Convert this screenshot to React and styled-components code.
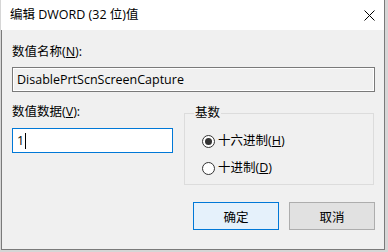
import React from 'react'
import styled, { createGlobalStyle } from 'styled-components'

const GlobalStyle = createGlobalStyle`
    html, body {
        margin: 0;
        padding: 0;
        background: #d6d6d6;
    }
    body {
        width: 388px;
        height: 252px;
        overflow: hidden;
        font-family: "Open Sans", "Noto Sans CJK SC", sans-serif;
        font-size: 12.5px;
        color: #000;
    }
`

const Window = styled.div`
    margin-left: 1px;
    width: 384px;
    height: 250px;
    box-sizing: border-box;
    background: #f0f0f0;
    border: 1px solid #7a7a7a;
    border-top: none;
    display: flex;
    flex-direction: column;
`

const TitleBar = styled.div`
    height: 30px;
    flex: none;
    background: #fff;
    display: flex;
    align-items: center;
    justify-content: space-between;
    padding: 0 9px 0 9px;
    margin-left: -1px;
`

const Title = styled.span`
    line-height: 16px;
`

const Body = styled.div`
    flex: 1;
    padding: 14px 9px 0 10px;
    display: flex;
    flex-direction: column;
`

const Label = styled.div`
    line-height: 16px;
    height: 16px;
    margin-bottom: ${p => p.$gap || 7}px;
`

const TextBox = styled.div`
    height: 25px;
    box-sizing: border-box;
    display: flex;
    align-items: center;
    padding-left: 4px;
    border: 1px solid ${p => (p.$focused ? '#0078d7' : '#7a7a7a')};
    background: ${p => (p.$focused ? '#fff' : '#f0f0f0')};
    box-shadow: ${p => (p.$focused ? 'none' : 'inset 0 0 0 1px #fff')};
    line-height: 16px;
    white-space: nowrap;
`

const Caret = styled.span`
    display: inline-block;
    width: 1px;
    height: 16px;
    background: #000;
    margin-left: 1px;
`

const Row = styled.div`
    display: grid;
    grid-template-columns: 161px 190px;
    column-gap: 11px;
    margin-top: 12px;
`

const Column = styled.div`
    display: flex;
    flex-direction: column;
`

const Group = styled.fieldset`
    margin: 1px 0 0 0;
    padding: 12px 0 0 9px;
    border: 1px solid #dcdcdc;
    height: 80px;
    box-sizing: border-box;
    min-width: 0;
    display: flex;
    flex-direction: column;
    gap: 11px;
`

const Legend = styled.legend`
    padding: 0 1px;
    margin-left: 0;
    line-height: 16px;
`

const RadioRow = styled.label`
    display: flex;
    align-items: center;
    gap: 3px;
    margin-left: 8px;
    line-height: 16px;
`

const RadioCircle = styled.span`
    width: 13px;
    height: 13px;
    box-sizing: border-box;
    border: 1px solid #333;
    border-radius: 50%;
    background: #fff;
    display: flex;
    align-items: center;
    justify-content: center;
    &::after {
        content: '';
        width: 7px;
        height: 7px;
        border-radius: 50%;
        background: #333;
        display: ${p => (p.$checked ? 'block' : 'none')};
    }
`

const Buttons = styled.div`
    display: flex;
    justify-content: flex-end;
    gap: 10px;
    margin-top: 17px;
`

const Button = styled.button`
    width: 86px;
    height: 28px;
    box-sizing: border-box;
    font: inherit;
    color: #000;
    border: 1px solid ${p => (p.$primary ? '#0078d7' : '#adadad')};
    background: ${p => (p.$primary ? '#e5f1fb' : '#e1e1e1')};
    padding: 0;
`

function CloseIcon() {
    return (
        <svg width="11" height="11" viewBox="0 0 11 11">
            <path d="M0.5 0.5 L10.5 10.5 M10.5 0.5 L0.5 10.5" stroke="#000" strokeWidth="1" fill="none" />
        </svg>
    )
}

export default function App() {
    return (
        <>
            <GlobalStyle />
            <Window>
                <TitleBar>
                    <Title>编辑 DWORD (32 位)值</Title>
                    <CloseIcon />
                </TitleBar>
                <Body>
                    <Label>数值名称(<u>N</u>):</Label>
                    <TextBox>DisablePrtScnScreenCapture</TextBox>
                    <Row>
                        <Column>
                            <Label $gap={8}>数值数据(<u>V</u>):</Label>
                            <TextBox $focused>1<Caret /></TextBox>
                        </Column>
                        <Group>
                            <Legend>基数</Legend>
                            <RadioRow><RadioCircle $checked /><span>十六进制(<u>H</u>)</span></RadioRow>
                            <RadioRow><RadioCircle /><span>十进制(<u>D</u>)</span></RadioRow>
                        </Group>
                    </Row>
                    <Buttons>
                        <Button $primary>确定</Button>
                        <Button>取消</Button>
                    </Buttons>
                </Body>
            </Window>
        </>
    )
}
